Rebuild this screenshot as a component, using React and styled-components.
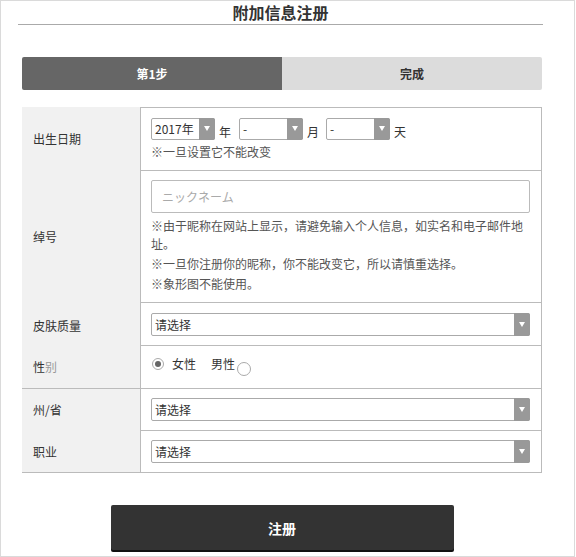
import React from 'react';
import styled, { createGlobalStyle } from 'styled-components';

const GlobalStyle = createGlobalStyle`
  html, body {
    margin: 0;
    padding: 0;
    background: #fff;
  }
  body {
    font-family: "Noto Sans CJK SC", "Noto Sans", sans-serif;
    color: #333;
    font-size: 12px;
  }
  * { box-sizing: border-box; }
`;

const Frame = styled.div`
  width: 575px;
  height: 557px;
  border: 1px solid #dadada;
  overflow: hidden;
`;

const Wrapper = styled.div`
  width: 520px;
  margin-left: 21px;
`;

const Title = styled.h1`
  margin: 0 -1px 0 -4px;
  padding-bottom: 1px;
  font-size: 16px;
  line-height: 22px;
  font-weight: bold;
  color: #333;
  text-align: center;
  border-bottom: 1px solid #aaa;
`;

const Steps = styled.div`
  display: flex;
  height: 33px;
  margin-top: 32px;
  border-radius: 2px;
`;

const Step = styled.div`
  position: relative;
  flex: 1;
  display: flex;
  align-items: center;
  justify-content: center;
  font-size: 12px;
  font-weight: bold;
  background: ${p => (p.$active ? '#666' : '#dcdcdc')};
  color: ${p => (p.$active ? '#fff' : '#333')};
  border-radius: ${p => (p.$active ? '2px 0 0 2px' : '0 2px 2px 0')};

  ${p => p.$active && `
    &::after {
      content: '';
      position: absolute;
      right: -6px;
      top: 12px;
      border-left: 6px solid #666;
      border-top: 4px solid transparent;
      border-bottom: 4px solid transparent;
    }
  `}
`;

const Table = styled.div`
  margin-top: 17px;
  border-bottom: 1px solid #bbb;
`;

const Row = styled.div`
  display: grid;
  grid-template-columns: 118px 1fr;
  border-top: ${p => (p.$divider ? '1px solid #bbb' : 'none')};
`;

const Label = styled.div`
  display: flex;
  align-items: center;
  padding-left: 11px;
  padding-top: ${p => p.$shift || 0}px;
  background: #f1f1f1;
  color: #333;
  font-size: 12px;
`;

const Faded = styled.span`
  color: #999;
`;

const Cell = styled.div`
  border-left: 1px solid #bbb;
  border-right: 1px solid #bbb;
  border-top: ${p => (p.$noTop ? 'none' : '1px solid #bbb')};
  padding: ${p => p.$pad || '9px 11px 9px 10px'};
`;

const Inline = styled.div`
  display: flex;
  align-items: flex-end;
`;

const SelectBox = styled.div`
  display: flex;
  align-items: center;
  width: ${p => p.$width || '100%'};
  height: ${p => p.$height || 23}px;
  border: 1px solid #aaa;
  border-radius: 2px;
  background: #fff;
  padding-left: 3px;
  font-size: 12px;
  color: #333;
`;

const SelectText = styled.span`
  flex: 1;
  line-height: 16px;
`;

const Arrow = styled.span`
  align-self: stretch;
  width: 16px;
  margin: -1px -1px -1px 0;
  background: #999;
  border-radius: 0 2px 2px 0;
  display: flex;
  align-items: center;
  justify-content: center;

  &::before {
    content: '';
    border-top: 5px solid #fff;
    border-left: 3.5px solid transparent;
    border-right: 3.5px solid transparent;
    margin-top: -1px;
  }
`;

const Unit = styled.span`
  font-size: 12px;
  line-height: 16px;
  margin: 0 ${p => p.$after}px 0 4px;
  color: #333;
`;

const Note = styled.p`
  margin: ${p => p.$top || 2}px 0 0;
  font-size: 12px;
  line-height: ${p => p.$lh || 18}px;
  color: #555;
`;

const TextInput = styled.input`
  display: block;
  width: 100%;
  height: 33px;
  border: 1px solid #bbb;
  border-radius: 2px;
  padding: 0 10px;
  font-family: inherit;
  font-size: 12px;
  color: #333;
  outline: none;

  &::placeholder {
    color: #aaa;
  }
`;

const RadioGroup = styled.div`
  display: flex;
  align-items: flex-start;
  height: 25px;
`;

const RadioDot = styled.span`
  display: inline-block;
  width: ${p => (p.$checked ? 12 : 14)}px;
  height: ${p => (p.$checked ? 12 : 14)}px;
  margin-top: ${p => (p.$checked ? 2 : 6)}px;
  border: 1px solid #aaa;
  border-radius: 50%;
  background: #fff;
  position: relative;

  ${p => p.$checked && `
    &::after {
      content: '';
      position: absolute;
      left: 2px;
      top: 2px;
      width: 6px;
      height: 6px;
      border-radius: 50%;
      background: #666;
    }
  `}
`;

const RadioText = styled.span`
  font-size: 12px;
  line-height: 16px;
  color: #333;
  margin: ${p => p.$margin};
`;

const Submit = styled.button`
  display: block;
  width: 343px;
  height: 45px;
  margin: 32px auto 0;
  border: none;
  border-radius: 2px;
  background: #333;
  box-shadow: 0 2px 0 #111;
  color: #fff;
  font-family: inherit;
  font-size: 14px;
  font-weight: bold;
  cursor: pointer;
`;

const Select = ({ value, width, height }) => (
  <SelectBox $width={width} $height={height}>
    <SelectText>{value}</SelectText>
    <Arrow />
  </SelectBox>
);

export default function App() {
  return (
    <Frame>
      <GlobalStyle />
      <Wrapper>
        <Title>附加信息注册</Title>

        <Steps>
          <Step $active>第1步</Step>
          <Step>完成</Step>
        </Steps>

        <Table>
          <Row>
            <Label>出生日期</Label>
            <Cell $pad="10px 11px 10px 10px">
              <Inline>
                <Select value="2017年" width="64px" height={22} />
                <Unit $after={8}>年</Unit>
                <Select value="-" width="64px" height={22} />
                <Unit $after={7}>月</Unit>
                <Select value="-" width="64px" height={22} />
                <Unit $after={0}>天</Unit>
              </Inline>
              <Note $top={4} $lh={16}>※一旦设置它不能改变</Note>
            </Cell>
          </Row>

          <Row>
            <Label>绰号</Label>
            <Cell $pad="9px 11px 9px 10px">
              <TextInput placeholder="ニックネーム" />
              <Note $top={4}>※由于昵称在网站上显示，请避免输入个人信息，如实名和电子邮件地址。</Note>
              <Note>※一旦你注册你的昵称，你不能改变它，所以请慎重选择。</Note>
              <Note>※象形图不能使用。</Note>
            </Cell>
          </Row>

          <Row>
            <Label $shift={3}>皮肤质量</Label>
            <Cell $pad="10px 11px 9px 10px">
              <Select value="请选择" />
            </Cell>
          </Row>

          <Row>
            <Label>性<Faded>别</Faded></Label>
            <Cell $pad="10px 11px 7px 11px">
              <RadioGroup>
                <RadioDot $checked />
                <RadioText $margin="0 0 0 8px">女性</RadioText>
                <RadioText $margin="0 2px 0 15px">男性</RadioText>
                <RadioDot />
              </RadioGroup>
            </Cell>
          </Row>

          <Row $divider>
            <Label>州/省</Label>
            <Cell $noTop>
              <Select value="请选择" />
            </Cell>
          </Row>

          <Row>
            <Label>职业</Label>
            <Cell>
              <Select value="请选择" />
            </Cell>
          </Row>
        </Table>

        <Submit>注册</Submit>
      </Wrapper>
    </Frame>
  );
}
